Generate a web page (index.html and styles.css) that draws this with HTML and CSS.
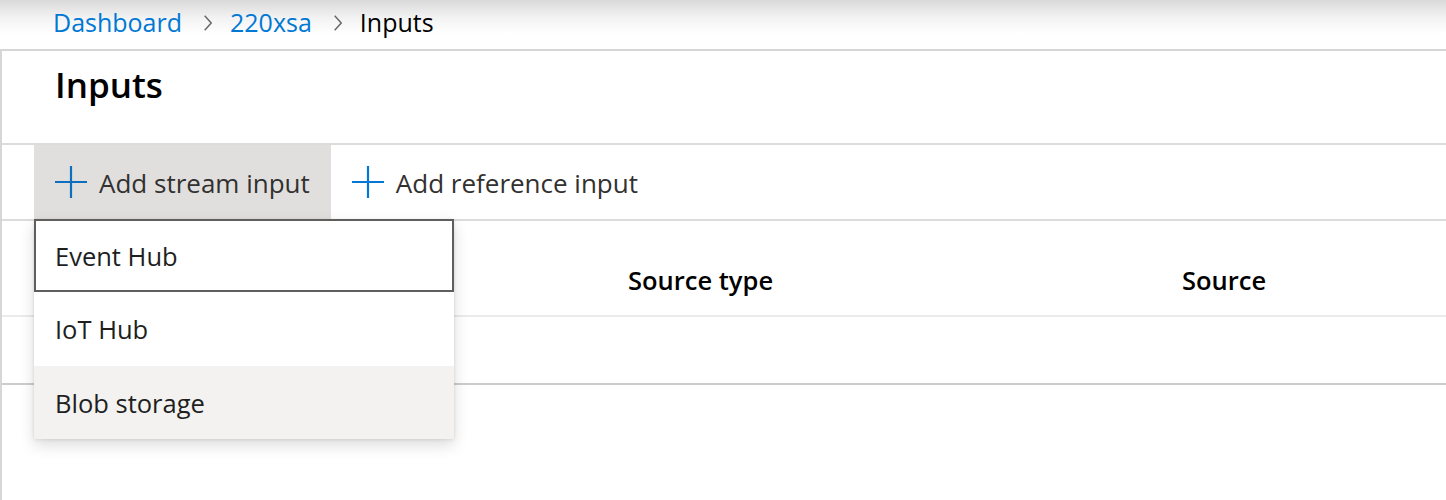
FILE: index.html
```html
<!DOCTYPE html>
<html lang="en">
<head>
<meta charset="utf-8">
<title>Inputs</title>
<link rel="stylesheet" href="styles.css">
</head>
<body>
  <nav class="breadcrumb">
    <a class="crumb-link" href="#">Dashboard</a>
    <svg class="chevron" width="8" height="16" viewBox="0 0 8 16"><polyline points="0.7,0.7 7.2,8 0.7,15.3" fill="none" stroke="#666666" stroke-width="1.4"/></svg>
    <a class="crumb-link" href="#">220xsa</a>
    <svg class="chevron" width="8" height="16" viewBox="0 0 8 16"><polyline points="0.7,0.7 7.2,8 0.7,15.3" fill="none" stroke="#666666" stroke-width="1.4"/></svg>
    <span class="crumb-current">Inputs</span>
  </nav>

  <main class="panel">
    <header class="panel-title">
      <h1>Inputs</h1>
    </header>

    <div class="toolbar">
      <button class="tool-btn tool-btn-active">
        <svg class="plus" width="32" height="32" viewBox="0 0 32 32"><path d="M16 0V32M0 16H32" stroke="currentColor" stroke-width="2.2" fill="none"/></svg>
        <span>Add stream input</span>
      </button>
      <button class="tool-btn">
        <svg class="plus" width="32" height="32" viewBox="0 0 32 32"><path d="M16 0V32M0 16H32" stroke="currentColor" stroke-width="2.2" fill="none"/></svg>
        <span>Add reference input</span>
      </button>

      <ul class="menu">
        <li class="menu-item menu-item-focus">Event Hub</li>
        <li class="menu-item menu-item-mid">IoT Hub</li>
        <li class="menu-item menu-item-hover">Blob storage</li>
      </ul>
    </div>

    <div class="table">
      <div class="table-head">
        <div class="th th-name"></div>
        <div class="th">Source type</div>
        <div class="th">Source</div>
      </div>
      <div class="table-row"></div>
    </div>
  </main>
</body>
</html>
```

FILE: styles.css
```css
html, body {
  margin: 0;
  padding: 0;
  background: #fff;
}

body {
  font-family: "Open Sans", "Noto Sans", sans-serif;
  color: #323130;
  height: 500px;
  overflow: hidden;
  background: linear-gradient(#d9d9d9 0px, #f3f3f3 18px, #ffffff 34px) no-repeat;
  background-size: 100% 49px;
}

.breadcrumb {
  height: 49px;
  box-sizing: border-box;
  padding: 7px 0 0 53px;
  display: flex;
  align-items: flex-start;
  font-size: 25px;
  line-height: 30px;
}

.crumb-link {
  color: #0078d4;
  text-decoration: none;
}

.crumb-current {
  color: #000;
}

.chevron {
  margin: 8px 18px 0 22px;
  flex: none;
}

.panel {
  border-top: 2px solid #d6d6d6;
  border-left: 2px solid #d6d6d6;
  height: 451px;
  box-sizing: border-box;
  background: #fff;
}

.panel-title {
  height: 94px;
  box-sizing: border-box;
  padding: 14px 0 0 53px;
  border-bottom: 2px solid #dcdcdc;
}

.panel-title h1 {
  margin: 0;
  font-size: 35px;
  line-height: 40px;
  font-weight: 600;
  color: #000;
}

.toolbar {
  position: relative;
  display: flex;
  height: 76px;
  box-sizing: border-box;
  padding-left: 32px;
  border-bottom: 2px solid #dcdcdc;
}

.tool-btn {
  display: flex;
  align-items: center;
  gap: 12px;
  height: 74px;
  padding: 0 21px;
  border: 0;
  background: transparent;
  font-family: inherit;
  font-size: 26px;
  line-height: 30px;
  color: #323130;
  cursor: pointer;
}

.tool-btn span {
  position: relative;
  top: 1px;
}

.tool-btn .plus {
  color: #0078d4;
  flex: none;
}

.tool-btn-active {
  background: #e1dfdd;
}

.tool-btn-active .plus {
  color: #106ebe;
}

.menu {
  position: absolute;
  left: 32px;
  top: 74px;
  width: 420px;
  margin: 0;
  padding: 0;
  list-style: none;
  background: #fff;
  box-shadow: 0 6.4px 14.4px 0 rgba(0, 0, 0, 0.14), 0 1.2px 3.6px 0 rgba(0, 0, 0, 0.11);
  z-index: 5;
}

.menu-item {
  display: flex;
  align-items: center;
  height: 73px;
  box-sizing: border-box;
  padding-left: 19px;
  border: 2px solid transparent;
  font-size: 25.5px;
  line-height: 30px;
  color: #201f1e;
}

.menu-item-focus {
  border-color: #605e5c;
}

.menu-item-mid {
  height: 74px;
}

.menu-item-hover {
  background: #f3f2f1;
}

.table-head {
  display: grid;
  grid-template-columns: 626px 554px 1fr;
  height: 96px;
  box-sizing: border-box;
  border-bottom: 2px solid #ebebeb;
  align-items: end;
  padding-bottom: 20px;
}

.th {
  font-size: 25.5px;
  line-height: 30px;
  font-weight: 600;
  color: #000;
}

.table-row {
  height: 68px;
  box-sizing: border-box;
  border-bottom: 2px solid #cccccc;
}
```
